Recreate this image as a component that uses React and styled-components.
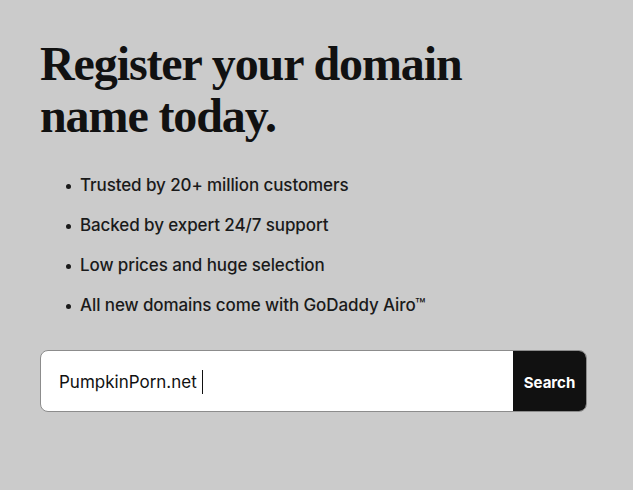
import React from "react";
import styled, { createGlobalStyle } from "styled-components";

const Global = createGlobalStyle`
  html, body { margin: 0; padding: 0; background: #cbcbcb; }
  body { font-family: "Inter", "Noto Sans", sans-serif; color: #111; }
`;

const Page = styled.main`
  width: 633px;
  height: 490px;
  box-sizing: border-box;
  padding: 38px 46px 0 40px;
  display: flex;
  flex-direction: column;
`;

const Heading = styled.h1`
  margin: 0;
  font-family: "Liberation Serif", "DejaVu Serif", serif;
  font-weight: 700;
  font-size: 48px;
  line-height: 52px;
  letter-spacing: -1.1px;
  color: #111;
  width: 460px;
`;

const List = styled.ul`
  margin: 32px 0 0 0;
  padding: 0 0 0 26px;
  display: flex;
  flex-direction: column;
  gap: 17px;
`;

const Item = styled.li`
  list-style: none;
  position: relative;
  padding-left: 14px;
  font-size: 17px;
  font-weight: 500;
  line-height: 23px;
  letter-spacing: -0.1px;
  color: #1a1a1a;
  &::before {
    content: "";
    position: absolute;
    left: 0;
    top: 10px;
    width: 5px;
    height: 5px;
    border-radius: 50%;
    background: #1a1a1a;
  }
`;

const SearchBar = styled.form`
  margin-top: 33px;
  display: flex;
  height: 62px;
  border: 1px solid #8c8c8c;
  border-radius: 8px;
  overflow: hidden;
  background: #fff;
  box-sizing: border-box;
`;

const Field = styled.div`
  flex: 1;
  display: flex;
  align-items: center;
  padding-left: 18px;
  padding-top: 2px;
  font-size: 17px;
  color: #111;
`;

const Caret = styled.span`
  display: inline-block;
  width: 1px;
  height: 24px;
  background: #111;
  margin-left: 5px;
`;

const Button = styled.button`
  width: 73px;
  border: none;
  background: #111;
  color: #fff;
  font-family: "Inter", "Noto Sans", sans-serif;
  font-weight: 700;
  font-size: 15px;
  padding: 2px 0 0 0;
`;

const items = [
  "Trusted by 20+ million customers",
  "Backed by expert 24/7 support",
  "Low prices and huge selection",
  "All new domains come with GoDaddy Airo™",
];

export default function App() {
  return (
    <>
      <Global />
      <Page>
        <Heading>Register your domain name today.</Heading>
        <List>
          {items.map((t) => (
            <Item key={t}>{t}</Item>
          ))}
        </List>
        <SearchBar onSubmit={(e) => e.preventDefault()}>
          <Field>
            PumpkinPorn.net
            <Caret />
          </Field>
          <Button type="submit">Search</Button>
        </SearchBar>
      </Page>
    </>
  );
}
